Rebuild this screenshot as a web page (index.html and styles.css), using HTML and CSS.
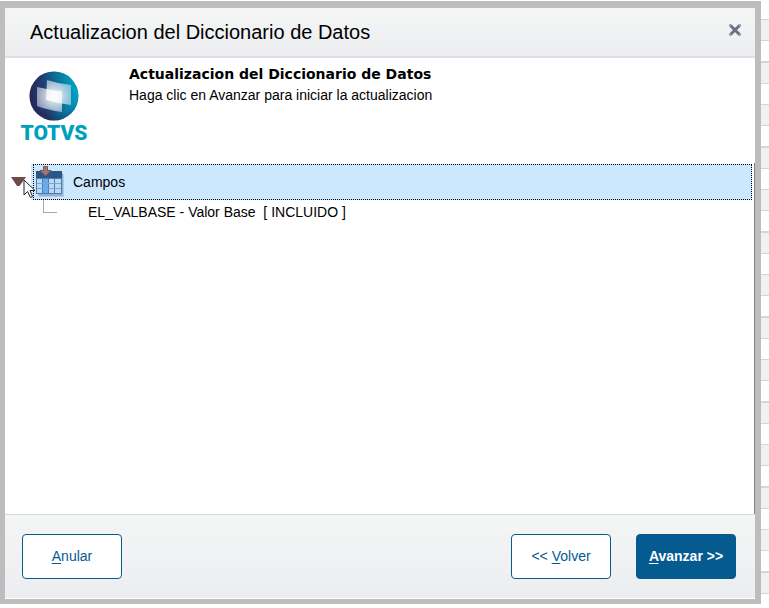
FILE: index.html
```html
<!DOCTYPE html>
<html lang="es">
<head>
    <meta charset="UTF-8">
    <meta name="viewport" content="width=device-width, initial-scale=1.0">
    <title>Actualizacion del Diccionario de Datos</title>
    <link rel="stylesheet" href="styles.css">
</head>
<body>
    <main class="dialog">
        <header class="dialog-header">
            <h1 class="dialog-title">Actualizacion del Diccionario de Datos</h1>
            <button class="close-button" type="button" aria-label="Cerrar">
                <svg width="12" height="12" viewBox="0 0 12 12" aria-hidden="true">
                    <path d="M1.500 1.500 L10.500 10.500 M10.500 1.500 L1.500 10.500" stroke="#6b7083" stroke-width="3"/>
                    <path d="M.5 2.500 V.5 H2.500 M9.500 .5 H11.500 V2.500 M.5 9.500 V11.500 H2.500 M9.500 11.500 H11.500 V9.500" fill="none" stroke="#6b7083" opacity=".6"/>
                </svg>
            </button>
        </header>

        <section class="intro">
            <div class="logo">
                <svg class="logo-globe" width="50" height="50" viewBox="0 0 50 50" aria-hidden="true">
                    <defs>
                        <linearGradient id="globe" x1="0" y1=".6" x2="1" y2=".4">
                            <stop offset="0" stop-color="#2b2b5c"/>
                            <stop offset=".3" stop-color="#1f3a6c"/>
                            <stop offset=".6" stop-color="#0c6c98"/>
                            <stop offset="1" stop-color="#00a8c8"/>
                        </linearGradient>
                        <radialGradient id="shade" cx=".55" cy=".45" r=".58">
                            <stop offset=".7" stop-color="#1b1c48" stop-opacity="0"/>
                            <stop offset="1" stop-color="#1b1c48" stop-opacity=".4"/>
                        </radialGradient>
                        <radialGradient id="glow" cx="25" cy="25" r="20" gradientUnits="userSpaceOnUse">
                            <stop offset="0" stop-color="#fff" stop-opacity=".9"/>
                            <stop offset=".4" stop-color="#fff" stop-opacity=".75"/>
                            <stop offset="1" stop-color="#e4e8ff" stop-opacity=".5"/>
                        </radialGradient>
                    </defs>
                    <circle cx="25" cy="25" r="24.500" fill="url(#globe)"/>
                    <circle cx="25" cy="25" r="24.500" fill="url(#shade)"/>
                    <path d="M8 16 Q20 19 33 20 V41 Q19 39 8 35 Z" fill="url(#glow)"/>
                    <path d="M18 9 Q30 13 42 14 V34 Q30 33 17 29 Z" fill="url(#glow)"/>
                </svg>
                <span class="logo-name">TOTVS</span>
            </div>
            <div class="intro-text">
                <h2 class="intro-title">Actualizacion del Diccionario de Datos</h2>
                <p class="intro-message">Haga clic en Avanzar para iniciar la actualizacion</p>
            </div>
        </section>

        <section class="tree-panel">
            <ul class="tree">
                <li>
                    <div class="tree-row">
                        <button class="tree-toggle" type="button" aria-label="Contraer Campos" aria-expanded="true">
                            <svg width="15" height="10" viewBox="0 0 15 10" aria-hidden="true">
                                <path d="M0 0 H15 L8.500 9 H6 Z" fill="#6d4c49"/>
                            </svg>
                        </button>
                        <div class="tree-node">
                            <svg width="30" height="32" viewBox="0 0 30 32" aria-hidden="true">
                                <path d="M4 8 H29 V31 H4 Z" fill="#7797b5" opacity=".35"/>
                                <path d="M3 7 H28 V30 H3 Z" fill="#7797b5" opacity=".5"/>
                                <path d="M1 5 H27 V28 H1 Z" fill="#4b7cb0"/>
                                <path d="M1 5 H27 V12 H1 Z" fill="#2b5687"/>
                                <path d="M2 13 H7 V27 H2 Z M14 13 H19 V27 H14 Z M20 13 H26 V27 H20 Z" fill="#bcd8f5"/>
                                <path d="M8 13 H13 V27 H8 Z" fill="#63acf2"/>
                                <path d="M2 17.500 H26 M2 22.500 H26" stroke="#7ba7d5"/>
                                <path d="M8.500 .5 H12.500 V4.500 H16 L10.500 10 L5 4.500 H8.500 Z" fill="#a07676" stroke="#76565a"/>
                            </svg>
                            <span>Campos</span>
                        </div>
                    </div>
                    <ul class="tree-children">
                        <li class="tree-leaf">EL_VALBASE - Valor Base&nbsp; [ INCLUIDO ]</li>
                    </ul>
                </li>
            </ul>
            <svg class="cursor" width="13" height="20" viewBox="0 0 13 20" aria-hidden="true">
                <path d="M1 1 V16 L4.500 12.500 L7.500 18.500 L9.500 17.500 L7 11.500 H12 Z" fill="#fff" stroke="#20202b"/>
            </svg>
        </section>

        <footer class="dialog-footer">
            <button class="button" type="button" accesskey="a"><u>A</u>nular</button>
            <div class="button-group">
                <button class="button" type="button" accesskey="v">&lt;&lt; <u>V</u>olver</button>
                <button class="button primary" type="button"><u>A</u>vanzar &gt;&gt;</button>
            </div>
        </footer>
    </main>
    <div class="grid-behind"></div>
</body>
</html>
```

FILE: styles.css
```css
* {
    box-sizing: border-box;
}
body {
    display: flex;
    min-height: 100vh;
    margin: 0;
    background-color: #fff;
    color: #000;
    font-family: "Liberation Sans", Arial, sans-serif;
    font-size: 14px;
}
button {
    font: inherit;
    cursor: pointer;
}
h1, h2, p, ul {
    margin: 0;
    padding: 0;
}
ul {
    list-style: none;
}
svg {
    display: block;
    flex: none;
}
.dialog {
    flex: 1;
    display: flex;
    flex-direction: column;
    margin: 1px 0 4px;
    border: solid #bdbdbd;
    border-width: 7px 6px 5px 5px;
}
/* striped list visible behind the dialog */
.grid-behind {
    width: 8px;
    background: repeating-linear-gradient(#d6d6d6 0 2px, #f1f1f1 2px 22px, #d6d6d6 22px 23px, #fff 23px 43px,
        #d6d6d6 43px 44px, #f1f1f1 44px 64px, #d6d6d6 64px 65px, #fff 65px 85px);
    background-position: 0 -24px;
    background-size: 100% 850px;
}
.dialog-header {
    display: flex;
    align-items: center;
    justify-content: space-between;
    height: 50px;
    padding: 0 14px 0 25px;
    border-bottom: 2px solid #dedfe2;
    background: linear-gradient(#f4f6f5, #ecedf0);
}
.dialog-title {
    font-size: 20px;
    font-weight: normal;
}
.close-button {
    padding: 0 0 4px;
    border: none;
    background: none;
}
.intro {
    display: flex;
    gap: 42px;
    height: 105px;
    padding: 6px 16px;
}
.logo {
    width: 66px;
    padding-top: 7px;
    display: flex;
    flex-direction: column;
    align-items: center;
}
.logo-name {
    color: #009fbe;
    font-family: Roboto, sans-serif;
    font-size: 21px;
    font-weight: 900;
    line-height: 24px;
}
.intro-title {
    font-family: "DejaVu Sans", Verdana, sans-serif;
    font-size: 14px;
    line-height: 20px;
}
.intro-message {
    line-height: 22px;
}
.tree-panel {
    position: relative;
    flex: 1;
    border-right: 1px solid #7c858f;
}
.tree {
    padding: 1px 2px 0 6px;
}
.tree-row {
    display: flex;
    align-items: center;
}
.tree-toggle {
    width: 20px;
    padding: 0;
    border: none;
    background: none;
}
.tree-node {
    flex: 1;
    display: flex;
    align-items: center;
    gap: 8px;
    height: 36px;
    padding: 0 0 1px 1px;
    border: 1px dotted #000;
    background-color: #cce8ff;
    box-shadow: -2px 0 #cce8ff;
    margin-left: 2px;
}
.tree-children {
    padding-left: 32px;
}
.tree-leaf {
    display: flex;
    gap: 31px;
    line-height: 24px;
}
.tree-leaf::before {
    content: "";
    width: 13px;
    height: 12px;
    border: solid #aaa7a7;
    border-width: 0 0 1px 1px;
}
.cursor {
    position: absolute;
    left: 18px;
    top: 16px;
}
.dialog-footer {
    display: flex;
    align-items: center;
    justify-content: space-between;
    height: 85px;
    padding: 0 19px 0 17px;
    border-top: 1px solid #d8d8d8;
    border-bottom: 1px solid #fff;
    background: linear-gradient(#f4f6f5, #ecedf0);
}
.button-group {
    display: flex;
    gap: 25px;
}
.button {
    width: 100px;
    height: 45px;
    padding: 0 0 2px;
    border: 1px solid #055a8f;
    border-radius: 4px;
    background-color: #fff;
    color: #055a8f;
}
.primary {
    background-color: #055a8f;
    color: #fff;
    font-weight: bold;
}
u {
    text-underline-offset: 2px;
}
```
